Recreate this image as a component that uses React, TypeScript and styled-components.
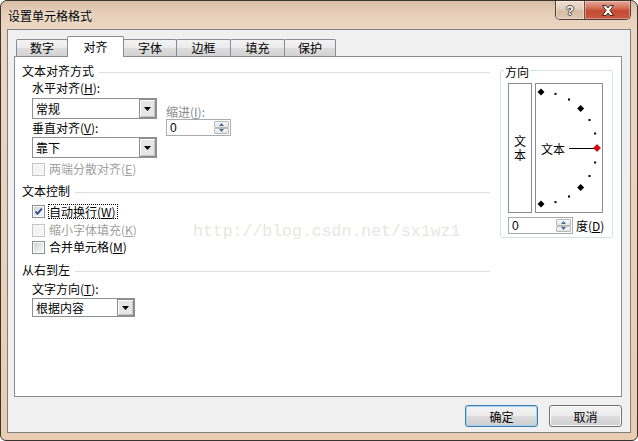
import React from "react";
import styled, { createGlobalStyle } from "styled-components";

const GlobalStyle = createGlobalStyle`
  html, body { margin: 0; padding: 0; background: #ffffff; }
  body {
    font-family: "Noto Sans CJK SC", "Liberation Sans", sans-serif;
    font-size: 12px;
    color: #000;
  }
  *, *::before, *::after { box-sizing: border-box; }
`;

const Window = styled.div`
  width: 638px;
  height: 441px;
  display: flex;
  flex-direction: column;
  border: 1px solid #3b332d;
  border-radius: 7px 7px 6px 6px;
  overflow: hidden;
  background: linear-gradient(180deg, #d8bea5 0px, #e7d0bb 14px, #ecd6c2 28px, #e9cdb2 100%);
`;

const TitleBar = styled.div`
  flex: 0 0 28px;
  display: flex;
  align-items: flex-start;
  padding-left: 7px;
`;

const Title = styled.div`
  margin-top: 8px;
  line-height: 14px;
  font-size: 12px;
  color: #000;
  text-shadow: 0 0 5px rgba(255, 255, 255, 0.7);
`;

const CaptionGroup = styled.div`
  margin-left: auto;
  margin-right: 6px;
  display: flex;
  height: 19px;
  border: 1px solid #4c4038;
  border-top: none;
  border-radius: 0 0 5px 5px;
  overflow: hidden;
`;

const CaptionButton = styled.div<{ $close?: boolean }>`
  width: ${(p) => (p.$close ? 46 : 28)}px;
  display: flex;
  align-items: center;
  justify-content: center;
  border-left: ${(p) => (p.$close ? "1px solid #6a5548" : "none")};
  background: ${(p) =>
    p.$close
      ? "linear-gradient(180deg, #e4a898 0%, #d67660 35%, #c54a32 55%, #c9583c 100%)"
      : "linear-gradient(180deg, #efe0d2 0%, #e2cdb9 45%, #d6bda5 55%, #dcc6b2 100%)"};
  box-shadow: inset 0 0 0 1px rgba(255, 255, 255, 0.35);
`;

const HelpGlyph = styled.span`
  font-family: "Liberation Sans", sans-serif;
  font-weight: bold;
  font-size: 13px;
  line-height: 13px;
  color: #ffffff;
  text-shadow: 1px 0 0 #4a4a4a, -1px 0 0 #4a4a4a, 0 1px 0 #4a4a4a, 0 -1px 0 #4a4a4a;
`;

const Client = styled.div`
  flex: 1;
  margin: 0 6px 7px 6px;
  border: 1px solid #7d7f82;
  background: #f0f0f0;
  display: flex;
  flex-direction: column;
  padding: 6px 8px 5px 6px;
`;

const TabRow = styled.div`
  height: 20px;
  flex: 0 0 20px;
  display: flex;
  align-items: flex-end;
  padding-left: 2px;
  position: relative;
  z-index: 1;
`;

const Tab = styled.div<{ $w: number; $active?: boolean }>`
  width: ${(p) => p.$w}px;
  height: ${(p) => (p.$active ? 21 : 17)}px;
  margin-bottom: ${(p) => (p.$active ? -1 : 0)}px;
  margin-left: -1px;
  &:first-child {
    margin-left: 0;
  }
  position: relative;
  z-index: ${(p) => (p.$active ? 2 : 0)};
  border: 1px solid #898c95;
  border-bottom: none;
  border-radius: 2px 2px 0 0;
  background: ${(p) =>
    p.$active
      ? "#ffffff"
      : "linear-gradient(180deg, #f3f3f3 0%, #ebebeb 50%, #dddddd 51%, #d2d2d2 100%)"};
  text-align: center;
  line-height: 16px;
  padding-top: ${(p) => (p.$active ? 2 : 0)}px;
  font-size: 12px;
`;

const Panel = styled.div`
  flex: 0 0 341px;
  height: 341px;
  background: #ffffff;
  border: 1px solid #898c95;
  position: relative;
  display: flex;
  align-items: flex-start;
  padding: 7px 8px 0 7px;
`;

const LeftCol = styled.div`
  width: 468px;
  display: flex;
  flex-direction: column;
`;

const SectionHeader = styled.div<{ $mt?: number }>`
  display: flex;
  align-items: center;
  height: 14px;
  line-height: 14px;
  margin-top: ${(p) => p.$mt ?? 0}px;
  &::after {
    content: "";
    flex: 1;
    height: 1px;
    background: #d5dfe5;
    margin-left: 5px;
    transform: translateY(1px);
  }
`;

const SectionBody = styled.div`
  display: flex;
  flex-direction: column;
  padding-left: 10px;
`;

const Label = styled.div<{ $mt?: number; $dim?: boolean }>`
  height: 14px;
  line-height: 14px;
  margin-top: ${(p) => p.$mt ?? 0}px;
  color: ${(p) => (p.$dim ? "#8a8a8a" : "#000")};
  white-space: nowrap;
`;

const AlignRow = styled.div<{ $mt?: number }>`
  display: flex;
  align-items: flex-start;
  margin-top: ${(p) => p.$mt ?? 0}px;
`;

const Column = styled.div<{ $ml?: number; $pt?: number }>`
  display: flex;
  flex-direction: column;
  margin-left: ${(p) => p.$ml ?? 0}px;
  padding-top: ${(p) => p.$pt ?? 0}px;
`;

const Select = styled.div<{ $w: number; $h: number; $mt?: number }>`
  width: ${(p) => p.$w}px;
  height: ${(p) => p.$h}px;
  margin-top: ${(p) => p.$mt ?? 0}px;
  border: 1px solid #8e8f8f;
  background: #ffffff;
  display: flex;
  align-items: stretch;
`;

const SelectText = styled.div`
  flex: 1;
  padding-left: 3px;
  display: flex;
  align-items: center;
`;

const SelectButton = styled.div`
  width: 17px;
  border: 1px solid #8c8c8c;
  background: #e6e6e6;
  box-shadow: inset 1px 1px 0 #ffffff, inset -1px -1px 0 #c4c4c4;
  display: flex;
  align-items: center;
  justify-content: center;
`;

const Spinner = styled.div<{ $w: number }>`
  width: ${(p) => p.$w}px;
  height: 17px;
  border: 1px solid #a9abb0;
  background: #ffffff;
  display: flex;
  align-items: stretch;
`;

const SpinValue = styled.div`
  flex: 1;
  padding-left: 3px;
  display: flex;
  align-items: center;
  font-family: "Liberation Sans", sans-serif;
  font-size: 12px;
`;

const SpinButtons = styled.div`
  width: 15px;
  margin: 1px;
  display: flex;
  flex-direction: column;
`;

const SpinHalf = styled.div`
  flex: 1;
  border: 1px solid #b9b9b9;
  border-radius: 1px;
  background: linear-gradient(180deg, #f7f7f7 0%, #e4e4e4 100%);
  display: flex;
  align-items: center;
  justify-content: center;
`;

const CheckRow = styled.div<{ $mt?: number; $disabled?: boolean }>`
  display: flex;
  align-items: center;
  height: 14px;
  margin-top: ${(p) => p.$mt ?? 0}px;
  gap: 4px;
  color: ${(p) => (p.$disabled ? "#a0a0a0" : "#000")};
  line-height: 14px;
`;

const CheckBox = styled.div<{ $disabled?: boolean }>`
  width: 13px;
  height: 13px;
  border: 1px solid ${(p) => (p.$disabled ? "#c6c6c6" : "#8e8f8f")};
  background: ${(p) => (p.$disabled ? "#f8f8f8" : "#ffffff")};
  padding: 1px;
  display: flex;
`;

const CheckInner = styled.div<{ $disabled?: boolean }>`
  flex: 1;
  display: flex;
  align-items: center;
  justify-content: center;
  background: ${(p) =>
    p.$disabled
      ? "#f4f4f4"
      : "linear-gradient(135deg, #cfd2d6 0%, #e4e6e8 50%, #f6f6f6 100%)"};
`;

const FocusLabel = styled.span`
  border: 1px dotted #000;
  margin-left: -1px;
  line-height: 13px;
  padding: 0 1px 0 0;
`;

const GroupBox = styled.div`
  width: 113px;
  height: 168px;
  margin-top: 6px;
  margin-left: 10px;
  border: 1px solid #d5dfe5;
  border-radius: 3px;
  display: flex;
  flex-direction: column;
  padding-left: 7px;
`;

const Legend = styled.div`
  align-self: flex-start;
  margin-top: -6px;
  margin-left: -4px;
  padding: 0 1px;
  background: #ffffff;
  line-height: 14px;
  height: 14px;
`;

const BoxRow = styled.div`
  display: flex;
  margin-top: 4px;
  height: 130px;
`;

const VerticalBox = styled.div`
  width: 24px;
  border: 1px solid #8b8d92;
  display: flex;
  flex-direction: column;
  align-items: center;
  justify-content: center;
  line-height: 14px;
`;

const DialBox = styled.div`
  width: 68px;
  margin-left: 3px;
  border: 1px solid #8b8d92;
  position: relative;
  display: flex;
  align-items: center;
  padding-left: 5px;
`;

const DialDrawing = styled.svg`
  position: absolute;
  left: 0;
  top: 0;
`;

const DialText = styled.span`
  position: relative;
  line-height: 14px;
  margin-top: 1px;
`;

const DegreeRow = styled.div`
  display: flex;
  align-items: center;
  margin-top: 4px;
  gap: 3px;
`;

const Watermark = styled.div`
  position: absolute;
  left: 178px;
  top: 166px;
  font-family: "Liberation Mono", monospace;
  font-size: 16.5px;
  line-height: 18px;
  color: #e9e6e1;
  pointer-events: none;
  white-space: nowrap;
`;

const ButtonRow = styled.div`
  display: flex;
  justify-content: flex-end;
  gap: 11px;
  margin-top: 8px;
`;

const PushButton = styled.div<{ $default?: boolean }>`
  width: 73px;
  height: 22px;
  border: 1px solid ${(p) => (p.$default ? "#3c7fb1" : "#707070")};
  border-radius: 3px;
  background: linear-gradient(180deg, #f2f2f2 0%, #ebebeb 50%, #dddddd 51%, #cfcfcf 100%);
  box-shadow: ${(p) =>
    p.$default ? "inset 0 0 0 1px #9fd5f3" : "inset 0 0 0 1px #fbfbfb"};
  display: flex;
  align-items: center;
  justify-content: center;
  font-size: 12px;
`;

const Ul = styled.span`
  text-decoration: underline;
`;

const Arrow = () => (
  <svg width="7" height="4" viewBox="0 0 7 4">
    <polygon points="0,0 7,0 3.5,4" fill="#000" />
  </svg>
);

const SpinArrow = ({ up }: { up?: boolean }) => (
  <svg width="5" height="3" viewBox="0 0 5 3">
    <polygon points={up ? "0,3 5,3 2.5,0" : "0,0 5,0 2.5,3"} fill="#4b6a9b" />
  </svg>
);

const SpinBox = ({ w }: { w: number }) => (
  <Spinner $w={w}>
    <SpinValue>0</SpinValue>
    <SpinButtons>
      <SpinHalf>
        <SpinArrow up />
      </SpinHalf>
      <SpinHalf>
        <SpinArrow />
      </SpinHalf>
    </SpinButtons>
  </Spinner>
);

const CheckMark = () => (
  <svg width="9" height="9" viewBox="0 0 9 9">
    <path d="M1.5 4.5 L3.5 6.8 L7.8 1.6" stroke="#22408f" strokeWidth="1.7" fill="none" />
  </svg>
);

const DIAL = Array.from({ length: 13 }, (_, i) => {
  const deg = 90 - i * 15;
  const rad = (deg * Math.PI) / 180;
  return { deg, x: 5 + 56 * Math.cos(rad), y: 64 - 56 * Math.sin(rad) };
});

const diamond = (x: number, y: number, s: number) =>
  `${x},${y - s} ${x + s},${y} ${x},${y + s} ${x - s},${y}`;

const tabs = [
  { t: "数字", w: 52 },
  { t: "对齐", w: 57, active: true },
  { t: "字体", w: 54 },
  { t: "边框", w: 55 },
  { t: "填充", w: 55 },
  { t: "保护", w: 52 },
];

export default function App() {
  return (
    <>
      <GlobalStyle />
      <Window>
        <TitleBar>
          <Title>设置单元格格式</Title>
          <CaptionGroup>
            <CaptionButton>
              <HelpGlyph>?</HelpGlyph>
            </CaptionButton>
            <CaptionButton $close>
              <svg width="14" height="11" viewBox="0 0 14 11">
                <path
                  d="M1.5 0.5 H5 L7 3 L9 0.5 H12.5 L9 5.5 L12.5 10.5 H9 L7 8 L5 10.5 H1.5 L5 5.5 Z"
                  fill="#ffffff"
                  stroke="#4a2a22"
                  strokeWidth="1"
                />
              </svg>
            </CaptionButton>
          </CaptionGroup>
        </TitleBar>
        <Client>
          <TabRow>
            {tabs.map((tb) => (
              <Tab key={tb.t} $w={tb.w} $active={tb.active}>
                {tb.t}
              </Tab>
            ))}
          </TabRow>
          <Panel>
            <LeftCol>
              <SectionHeader>文本对齐方式</SectionHeader>
              <SectionBody>
                <Label $mt={3}>
                  水平对齐(<Ul>H</Ul>):
                </Label>
                <AlignRow $mt={3}>
                  <Column>
                    <Select $w={125} $h={21}>
                      <SelectText>常规</SelectText>
                      <SelectButton>
                        <Arrow />
                      </SelectButton>
                    </Select>
                    <Label $mt={2}>
                      垂直对齐(<Ul>V</Ul>):
                    </Label>
                    <Select $w={125} $h={21} $mt={2}>
                      <SelectText>靠下</SelectText>
                      <SelectButton>
                        <Arrow />
                      </SelectButton>
                    </Select>
                  </Column>
                  <Column $ml={9} $pt={7}>
                    <Label $dim>
                      缩进(<Ul>I</Ul>):
                    </Label>
                    <SpinBox w={65} />
                  </Column>
                </AlignRow>
                <CheckRow $mt={4} $disabled>
                  <CheckBox $disabled>
                    <CheckInner $disabled />
                  </CheckBox>
                  <span>
                    两端分散对齐(<Ul>E</Ul>)
                  </span>
                </CheckRow>
              </SectionBody>
              <SectionHeader $mt={8}>文本控制</SectionHeader>
              <SectionBody>
                <CheckRow $mt={6}>
                  <CheckBox>
                    <CheckInner>
                      <CheckMark />
                    </CheckInner>
                  </CheckBox>
                  <FocusLabel>
                    自动换行(<Ul>W</Ul>)
                  </FocusLabel>
                </CheckRow>
                <CheckRow $mt={5} $disabled>
                  <CheckBox $disabled>
                    <CheckInner $disabled />
                  </CheckBox>
                  <span>
                    缩小字体填充(<Ul>K</Ul>)
                  </span>
                </CheckRow>
                <CheckRow $mt={3}>
                  <CheckBox>
                    <CheckInner />
                  </CheckBox>
                  <span>
                    合并单元格(<Ul>M</Ul>)
                  </span>
                </CheckRow>
              </SectionBody>
              <SectionHeader $mt={9}>从右到左</SectionHeader>
              <SectionBody>
                <Label $mt={5}>
                  文字方向(<Ul>T</Ul>):
                </Label>
                <Select $w={103} $h={19} $mt={2}>
                  <SelectText>根据内容</SelectText>
                  <SelectButton>
                    <Arrow />
                  </SelectButton>
                </Select>
              </SectionBody>
            </LeftCol>
            <GroupBox>
              <Legend>方向</Legend>
              <BoxRow>
                <VerticalBox>
                  <span>文</span>
                  <span>本</span>
                </VerticalBox>
                <DialBox>
                  <DialDrawing width="66" height="128" viewBox="0 0 66 128">
                    <line x1="33" y1="64.5" x2="58" y2="64.5" stroke="#000" strokeWidth="1" />
                    {DIAL.map((d) =>
                      d.deg % 45 === 0 ? (
                        <polygon
                          key={d.deg}
                          points={diamond(d.x, d.y, 3.5)}
                          fill={d.deg === 0 ? "#ee0000" : "#000"}
                          stroke={d.deg === 0 ? "#5a0000" : "none"}
                          strokeWidth="0.6"
                        />
                      ) : (
                        <rect key={d.deg} x={d.x - 1} y={d.y - 1} width="2" height="2" fill="#000" />
                      )
                    )}
                  </DialDrawing>
                  <DialText>文本</DialText>
                </DialBox>
              </BoxRow>
              <DegreeRow>
                <SpinBox w={65} />
                <span>
                  度(<Ul>D</Ul>)
                </span>
              </DegreeRow>
            </GroupBox>
            <Watermark>http://blog.csdn.net/sx1wz1</Watermark>
          </Panel>
          <ButtonRow>
            <PushButton $default>确定</PushButton>
            <PushButton>取消</PushButton>
          </ButtonRow>
        </Client>
      </Window>
    </>
  );
}
